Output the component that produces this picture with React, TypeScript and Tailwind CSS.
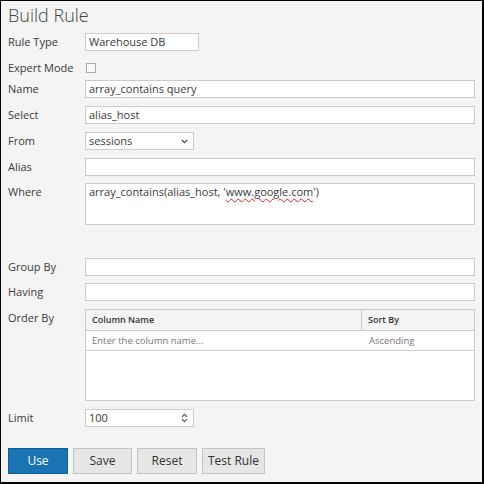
import React from "react";

const font = { fontFamily: '"Open Sans", "Liberation Sans", sans-serif' };

function Row({ label, children, className = "", top = false }: { label: string; children: React.ReactNode; className?: string; top?: boolean }) {
  return (
    <div className={`flex ${top ? "items-start" : "items-center"} ${className}`}>
      <div className="w-[77px] shrink-0 h-[18px] leading-[18px] text-[11px] text-[#3a3a3a]">{label}</div>
      {children}
    </div>
  );
}

function Box({ text, className = "" }: { text?: string; className?: string }) {
  return (
    <div className={`h-[18px] border border-[#ccc] bg-white pl-[3px] text-[11px] leading-[16px] text-[#3a3a3a] ${className}`}>{text}</div>
  );
}

export default function App() {
  return (
    <div style={font} className="w-[484px] h-[484px] bg-[#f4f4f4] border-t border-l border-black border-r-2 border-b-2 px-[7px] box-border">
      <div className="pt-[2px] h-[26px] text-[18px] leading-[24px] font-light text-[#444]">Build Rule</div>
      <div className="mt-[6px]">
        <Row label="Rule Type" className="mb-[8px]">
          <Box text="Warehouse DB" className="w-[114px]" />
        </Row>
        <Row label="Expert Mode" className="mb-[3px]">
          <div className="ml-[1px] w-[10px] h-[10px] border border-[#aaa] bg-[#f8f8f8] mt-[-1px]" />
        </Row>
        <Row label="Name" className="mb-[8px]">
          <Box text="array_contains query" className="flex-1" />
        </Row>
        <Row label="Select" className="mb-[8px]">
          <Box text="alias_host" className="flex-1" />
        </Row>
        <Row label="From" className="mb-[8px]">
          <div className="w-[109px] h-[18px] border border-[#ccc] bg-white pl-[3px] text-[11px] leading-[16px] text-[#3a3a3a] flex items-center justify-between pr-[5px]">
            <span>sessions</span>
            <svg width="7" height="5" viewBox="0 0 7 5"><path d="M0.8 1 L3.5 3.7 L6.2 1" fill="none" stroke="#555" strokeWidth="1.3" /></svg>
          </div>
        </Row>
        <Row label="Alias" className="mb-[7px]">
          <Box className="flex-1" />
        </Row>
        <Row label="Where" top className="mb-[33px]">
          <div className="flex-1 h-[42px] border border-[#ccc] bg-white pl-[3px] text-[11px] leading-[16px] text-[#3a3a3a]">
            array_contains(alias_host, '<span className="underline decoration-wavy decoration-[#e02020] decoration-1 underline-offset-[2px]">www.google.com</span>')
          </div>
        </Row>
        <Row label="Group By" className="mb-[7px]">
          <Box className="flex-1" />
        </Row>
        <Row label="Having" className="mb-[8px]">
          <Box className="flex-1" />
        </Row>
        <Row label="Order By" top className="mb-[8px]">
          <div className="flex-1 h-[92px] border border-[#ccc] bg-white flex flex-col">
            <div className="h-[21px] bg-[#f4f4f4] border-b border-[#ccc] flex text-[9px] font-semibold text-[#333]">
              <div className="w-[276px] border-r border-[#ccc] pl-[6px] leading-[20px]">Column Name</div>
              <div className="pl-[6px] leading-[20px]">Sort By</div>
            </div>
            <div className="h-[20px] border-b border-[#ccc] flex text-[9.5px] text-[#777]">
              <div className="w-[277px] pl-[6px] leading-[19px]">Enter the column name...</div>
              <div className="pl-[6px] leading-[19px]">Ascending</div>
            </div>
          </div>
        </Row>
        <Row label="Limit" className="mb-[21px]">
          <div className="w-[109px] h-[18px] border border-[#ccc] bg-white pl-[3px] text-[11px] leading-[16px] text-[#3a3a3a] flex items-center justify-between pr-[5px]">
            <span>100</span>
            <svg width="7" height="10" viewBox="0 0 7 10"><path d="M1 3.8 L3.5 1.3 L6 3.8 M1 6.2 L3.5 8.7 L6 6.2" fill="none" stroke="#555" strokeWidth="1.2" /></svg>
          </div>
        </Row>
        <div className="flex gap-[5px]">
          <button className="w-[60px] h-[26px] bg-[#1a74b3] border border-[#0f5e96] text-white text-[12px]">Use</button>
          <button className="w-[59px] h-[26px] bg-[#e6e6e6] border border-[#c4c4c4] text-[#333] text-[12px]">Save</button>
          <button className="w-[60px] h-[26px] bg-[#e6e6e6] border border-[#c4c4c4] text-[#333] text-[12px]">Reset</button>
          <button className="w-[63px] h-[26px] bg-[#e6e6e6] border border-[#c4c4c4] text-[#333] text-[12px]">Test Rule</button>
        </div>
      </div>
    </div>
  );
}
